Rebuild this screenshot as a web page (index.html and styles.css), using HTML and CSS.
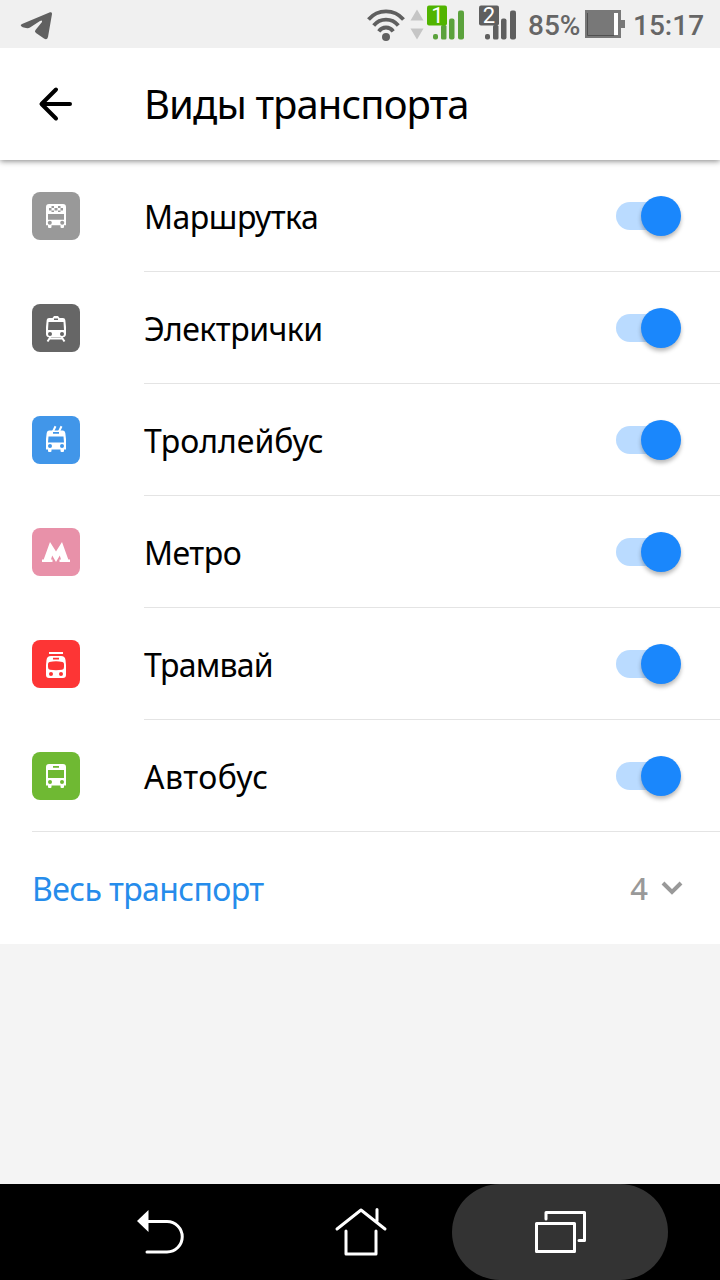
FILE: index.html
```
<!DOCTYPE html>
<html lang="ru">
<head>
<meta charset="UTF-8">
<meta name="viewport" content="width=device-width, initial-scale=1.0">
<title>Виды транспорта</title>
<link rel="stylesheet" href="styles.css">
</head>
<body>
<div class="statusbar">
    <svg class="telegram" width="34" height="30" viewBox="0 0 34 30"><path d="M1 14Q0 13 2 12L30 .3Q32.3-.3 32 2L28 25Q27 28.500 24 26.500L16 21Q14 19.500 15.500 18L22 10Q22.500 7.500 20 9L10 15.500Q8.500 16.500 6 16Q2 15.500 1 14Z"/></svg>
    <svg class="signals" width="152" height="34" viewBox="0 0 152 34">
        <g fill="none" stroke="#5f5f5f" stroke-width="3.800">
            <path d="M1.500 11.500Q8.500 3.400 19 3.400T36.500 11.500"/>
            <path d="M6.700 17.500Q11.500 11.700 19 11.700T31.300 17.500"/>
            <path d="M11.800 23.300Q14.500 19.500 19 19.500T26.200 23.300"/>
        </g>
        <circle cx="19" cy="29" r="4" fill="#5f5f5f"/>
        <path d="M50 1.500L56.500 12.500H43.500ZM43.500 20.500H56.500L50 31.500Z" fill="#c5c5c5"/>
        <g fill="#5ba23c">
            <rect x="66" y="26" width="5" height="5.500" rx="2"/>
            <rect x="74" y="17" width="5.500" height="14.500" rx="1.500"/>
            <rect x="82" y="10.500" width="5.500" height="21" rx="2"/>
            <rect x="91" y="2.500" width="6" height="29" rx="2"/>
        </g>
        <rect x="60" y="-2.500" width="20" height="20" rx="2" fill="#51b400"/>
        <text x="70.500" y="14.500" class="sim">1</text>
        <g fill="#5f5f5f">
            <rect x="118" y="26" width="5" height="5.500" rx="2"/>
            <rect x="126" y="17" width="5.500" height="14.500" rx="1.500"/>
            <rect x="134" y="10.500" width="5.500" height="21" rx="2"/>
            <rect x="143" y="2.500" width="6" height="29" rx="2"/>
            <rect x="112" y="-2.500" width="20" height="20" rx="2"/>
        </g>
        <text x="122" y="14.500" class="sim">2</text>
    </svg>
    <span class="percent">85%</span>
    <svg class="battery" width="40" height="28" viewBox="0 0 40 28">
        <path d="M0 0H36V10H40V18H36V28H0Z" fill="#787878"/>
        <path d="M29 3H33V25H29Z" fill="#fff"/>
        <path d="M2.500 3V25.500H29" fill="none" stroke="#505050"/>
    </svg>
    <span class="clock">15:17</span>
</div>

<div class="header">
    <svg class="back" width="34" height="34" viewBox="0 0 34 34"><path d="M31 17H3M17 2.500L2.500 17L17 31.500"/></svg>
    <h1>Виды транспорта</h1>
</div>

<div class="list">
    <div class="row">
        <svg class="badge minibus" viewBox="0 0 48 48">
            <path class="w" d="M17 12H31Q34 12 34 15V33.300H32V35Q32 36 31 36H29.500Q28.500 36 28.500 35V33.300H19.500V35Q19.500 36 18.500 36H17Q16 36 16 35V33.300H14V15Q14 12 17 12Z"/>
            <path class="c" d="M16 22H32V27.800H16ZM19.500 14H22V16H19.500ZM26 14H28.500V16H26ZM17 16H19.500V18.500H17ZM22.500 16H25.500V18.500H22.500ZM28.500 16H31V18.500H28.500ZM19.500 18.500H22V20H19.500ZM26 18.500H28.500V20H26Z"/>
            <circle class="c" cx="17.800" cy="30.700" r="2"/><circle class="c" cx="30.200" cy="30.700" r="2"/>
        </svg>
        <span class="name tight">Маршрутка</span><span class="toggle"></span>
    </div>
    <div class="row">
        <svg class="badge train" viewBox="0 0 48 48">
            <path class="w" d="M22 12H26L27.500 14H31Q33 14 33.300 16L34 23V30Q34 33 31 33.300H17Q14 33 14 30V23L14.700 16Q15 14 17 14H20.500Z"/>
            <path class="c" d="M16.500 18H31.500L32 26H16ZM22 14.500H26V16H22Z"/>
            <circle class="c" cx="18" cy="30" r="2"/><circle class="c" cx="30" cy="30" r="2"/>
            <path class="l" d="M18.500 33L15.500 37.500M29.500 33L32.500 37.500M18 34.500H30"/>
        </svg>
        <span class="name tight">Электрички</span><span class="toggle"></span>
    </div>
    <div class="row">
        <svg class="badge trolley" viewBox="0 0 48 48">
            <path class="l" d="M21 15.500L23.500 10.200M27 15.500L29.500 10.200"/>
            <path class="w" d="M17 14.500H31Q33 14.500 33.300 17L34 23V33.500H32V35Q32 36 31 36H29.500Q28.500 36 28.500 35V33.500H19.500V35Q19.500 36 18.500 36H17Q16 36 16 35V33.500H14V23L14.700 17Q15 14.500 17 14.500Z"/>
            <path class="c" d="M16.500 20.500H31.500L32 26.500H16ZM21 16H27V17.700H21Z"/>
            <circle class="c" cx="18" cy="30" r="2"/><circle class="c" cx="30" cy="30" r="2"/>
        </svg>
        <span class="name">Троллейбус</span><span class="toggle"></span>
    </div>
    <div class="row">
        <svg class="badge metro" viewBox="0 0 48 48">
            <path class="w" d="M18 14L24 23.500L30 14L36.300 31.500H38V34H27.500V31.500H29L27.800 27.500L24 34L20.200 27.500L19 31.500H20.500V34H10V31.500H11.700Z"/>
        </svg>
        <span class="name tight">Метро</span><span class="toggle"></span>
    </div>
    <div class="row">
        <svg class="badge tram" viewBox="0 0 48 48">
            <path class="w" d="M17 12H31V14H17ZM19 16H29Q33 16 33.500 20L34 25V35Q34 38 31 38H17Q14 38 14 35V25L14.500 20Q15 16 19 16Z"/>
            <path class="c" d="M17.500 22Q24 20.500 30.500 22Q32 22.500 32 24V27Q32 29.500 30 29.800Q24 30.500 18 29.800Q16 29.500 16 27V24Q16 22.500 17.500 22ZM21 17.700H27V19.500H21Z"/>
            <circle class="c" cx="19" cy="34" r="2"/><circle class="c" cx="29" cy="34" r="2"/>
        </svg>
        <span class="name tighter">Трамвай</span><span class="toggle"></span>
    </div>
    <div class="row">
        <svg class="badge bus" viewBox="0 0 48 48">
            <path class="w" d="M17 12H31Q34 12 34 15V33.500H32V35Q32 36 31 36H29.500Q28.500 36 28.500 35V33.500H19.500V35Q19.500 36 18.500 36H17Q16 36 16 35V33.500H14V15Q14 12 17 12Z"/>
            <path class="c" d="M16 18H32V26H16ZM21 14H27V15.700H21Z"/>
            <circle class="c" cx="18" cy="30" r="2"/><circle class="c" cx="30" cy="30" r="2"/>
        </svg>
        <span class="name wide">Автобус</span><span class="toggle"></span>
    </div>
    <div class="row all">
        <span class="link">Весь транспорт</span>
        <span class="count">4</span>
        <svg class="chevron" width="22" height="14" viewBox="0 0 22 14"><path d="M2 2L11 11L20 2"/></svg>
    </div>
</div>

<div class="navbar">
    <svg width="48" height="44" viewBox="0 0 48 44"><path d="M11 11.500H30A15.200 15.200 0 0 1 30 42H10"/><path class="fill" d="M0 11L11.500 0V22Z"/></svg>
    <svg class="home" width="52" height="48" viewBox="0 0 52 48"><path d="M2 21L26 2L50 21M42 13V1.500M11 23V46H41V23"/></svg>
    <div class="recent"><svg width="52" height="42" viewBox="0 0 52 42"><path d="M2.500 12.500H40.500V40.500H2.500ZM12 8V1.500H50.500V29.500H45"/></svg></div>
</div>
</body>
</html>
```
FILE: styles.css
```
* { box-sizing: border-box; }
body { margin: 0; height: 1280px; display: flex; flex-direction: column; background: #f4f4f4; color: #000; font-family: 'Noto Sans', 'Open Sans', sans-serif; overflow: hidden; }
svg { flex: none; display: block; overflow: visible; }

.statusbar { flex: none; height: 48px; background: #f0f0f0; display: flex; align-items: center; padding: 0 16px 0 20px; color: #666; font: 500 28px/48px Roboto, sans-serif; z-index: 2; }
.telegram { fill: #606060; margin-top: 5px; }
.signals { margin: 2px 0 0 auto; }
.sim { font: 400 22px Roboto, sans-serif; fill: #fff; text-anchor: middle; }
.percent { margin: 3px 5px 0 9px; width: 52px; }
.clock { margin: 3px 0 0 8px; width: 71px; }

.header { flex: none; height: 112px; display: flex; align-items: center; padding-left: 39px; background: #fff; box-shadow: 0 1px 6px rgba(0,0,0,.5); z-index: 1; }
.back { fill: none; stroke: #000; stroke-width: 4; stroke-linecap: round; stroke-linejoin: round; }
h1 { margin: 0 0 0 71px; font-size: 40px; font-weight: 400; line-height: 56px; letter-spacing: -.9px; white-space: nowrap; }

.list { flex: none; background: #fff; }
.row { height: 112px; display: flex; align-items: center; padding: 0 39px 0 32px; background: linear-gradient(#e4e4e4, #e4e4e4) 144px 111px / 100% 1px no-repeat; }
.row:nth-child(6) { background-position: 32px 111px; }
.badge { width: 48px; height: 48px; border-radius: 8px; background: currentColor; }
.minibus { color: #999; }
.train { color: #666; }
.trolley { color: #4196e9; }
.metro { color: #e891a9; }
.tram { color: #fd3535; }
.bus { color: #6fb933; }
.w { fill: #fff; }
.c { fill: currentColor; }
.l { fill: none; stroke: #fff; stroke-width: 2; }
.name { margin: 2px auto 0 64px; font-size: 32px; line-height: 44px; }
.tight { letter-spacing: -.5px; }
.tighter { letter-spacing: -.8px; }
.wide { letter-spacing: .5px; }

.toggle { position: relative; width: 65px; height: 28px; border-radius: 14px; background: linear-gradient(#badbff, #badbff) 0 0 / 50px 100% no-repeat; }
.toggle::after { content: ''; position: absolute; right: 0; top: -6px; width: 40px; height: 40px; border-radius: 50%; background: #1a87fc; box-shadow: 0 3px 4px rgba(0,0,0,.28); }

.all { background: none; padding-right: 37px; font-size: 32px; }
.link { margin: 0 auto 0 0; color: #268ceb; letter-spacing: -.6px; }
.count { margin: 0 13px 0 0; color: #999; font-size: 31px; font-weight: 500; }
.chevron { fill: none; stroke: #999; stroke-width: 4; }

.navbar { flex: none; margin-top: auto; height: 96px; background: #000; display: flex; align-items: center; padding: 0 52px 0 137px; }
.navbar svg { fill: none; stroke: #fff; stroke-width: 3; stroke-linecap: round; stroke-linejoin: round; }
.navbar .fill { fill: #fff; stroke: none; }
.home { margin-left: 150px; }
.recent { margin-left: auto; width: 216px; height: 96px; border-radius: 48px; background: #333; display: flex; align-items: center; justify-content: center; }
```
